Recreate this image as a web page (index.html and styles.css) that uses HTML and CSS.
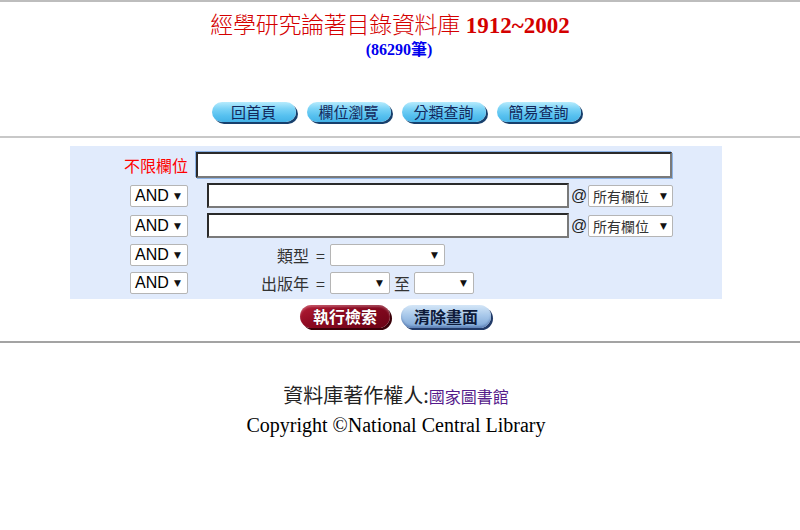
FILE: index.html
```html
<!DOCTYPE html>
<html lang="zh-Hant">
<head>
<meta charset="utf-8">
<title>經學研究論著目錄資料庫</title>
<link rel="stylesheet" href="styles.css">
</head>
<body>
<div class="topline"></div>
<h1 class="title"><span class="zh">經學研究論著目錄資料庫</span> <b>1912~2002</b></h1>
<div class="count">(86290筆)</div>

<nav class="nav">
  <a class="navbtn">回首頁</a>
  <a class="navbtn">欄位瀏覽</a>
  <a class="navbtn">分類查詢</a>
  <a class="navbtn">簡易查詢</a>
</nav>

<hr class="rule rule1">

<form class="search">
  <div class="row row-first">
    <label class="col1 red">不限欄位</label>
    <div class="input input-main"></div>
  </div>
  <div class="row">
    <div class="col1"><div class="select sel-and">AND<span class="arr">▼</span></div></div>
    <div class="input input-term"></div>
    <span class="at">@</span>
    <div class="select sel-field">所有欄位<span class="arr">▼</span></div>
  </div>
  <div class="row">
    <div class="col1"><div class="select sel-and">AND<span class="arr">▼</span></div></div>
    <div class="input input-term"></div>
    <span class="at">@</span>
    <div class="select sel-field">所有欄位<span class="arr">▼</span></div>
  </div>
  <div class="row row-short">
    <div class="col1"><div class="select sel-and">AND<span class="arr">▼</span></div></div>
    <span class="fieldlbl">類型&nbsp;&nbsp;=</span>
    <div class="select sel-type"><span class="arr">▼</span></div>
  </div>
  <div class="row row-short">
    <div class="col1"><div class="select sel-and">AND<span class="arr">▼</span></div></div>
    <span class="fieldlbl">出版年&nbsp;&nbsp;=</span>
    <div class="select sel-year"><span class="arr">▼</span></div>
    <span class="to">至</span>
    <div class="select sel-year"><span class="arr">▼</span></div>
  </div>
</form>

<div class="actions">
  <button class="act act-go" type="button">執行檢索</button>
  <button class="act act-clear" type="button">清除畫面</button>
</div>

<hr class="rule rule2">

<footer class="footer">
  <div class="owner">資料庫著作權人:<a class="lib">國家圖書館</a></div>
  <div class="copy">Copyright ©National Central Library</div>
</footer>
</body>
</html>
```

FILE: styles.css
```css
html, body {
  margin: 0;
  padding: 0;
  background: #ffffff;
}
body {
  font-family: "Liberation Sans", Arial, "Noto Sans CJK TC", sans-serif;
  color: #000;
}
.topline {
  height: 2px;
  background: #bdbdbd;
}
.title {
  margin: 7px 0 0 0;
  text-align: center;
  font-size: 23px;
  line-height: 28px;
  font-weight: normal;
  color: #d40000;
  font-family: "Liberation Serif", "Noto Sans CJK TC", serif;
  padding-right: 20px;
}
.title .zh {
  font-family: "Noto Sans CJK TC", sans-serif;
  font-weight: 300;
  letter-spacing: -0.3px;
}
.title b {
  font-weight: bold;
}
.count {
  text-align: center;
  color: #0000ee;
  font-weight: bold;
  font-size: 16px;
  line-height: 19px;
  font-family: "Liberation Serif", "Noto Sans CJK TC", serif;
  padding-right: 2px;
}
.nav {
  display: flex;
  justify-content: center;
  gap: 11px;
  margin-top: 43px;
  padding-right: 8px;
}
.navbtn {
  display: flex;
  align-items: center;
  justify-content: center;
  width: 84px;
  height: 20px;
  border-radius: 11px;
  background: linear-gradient(#b6ebfd 0%, #79d2f6 35%, #55c0ef 70%, #44b2e6 100%);
  box-shadow: 2px 2px 0 #173f6c;
  color: #13285c;
  font-size: 15px;
  font-family: "Noto Sans CJK TC", sans-serif;
  line-height: 20px;
  cursor: pointer;
}
.rule {
  border: 0;
  margin: 0;
}
.rule1 {
  margin-top: 14px;
  height: 2px;
  background: #c8c8c8;
}
.rule2 {
  margin-top: 13px;
  height: 2px;
  background: #a3a3a3;
}
.search {
  margin: 8px 0 0 70px;
  width: 652px;
  background: #e1ebfc;
  padding: 6px 0 5px 0;
  box-sizing: border-box;
  height: 153px;
  display: flex;
  flex-direction: column;
  gap: 5px;
}
.row {
  display: flex;
  align-items: center;
  height: 25px;
}
.row-first {
  height: 26px;
}
.row-short {
  height: 22px;
  margin-top: 1px;
}
.col1 {
  width: 118px;
  display: flex;
  justify-content: flex-end;
  flex: none;
}
.red {
  color: #ff0000;
  font-size: 16px;
  font-family: "Noto Sans CJK TC", sans-serif;
  line-height: 26px;
}
.input {
  background: #fff;
  box-sizing: border-box;
  border: 2px solid;
  border-color: #2a2a2a #7a7a7a #7a7a7a #2a2a2a;
}
.input-main {
  margin-left: 8px;
  width: 476px;
  height: 26px;
  box-shadow: 1px 1px 0 #8cb3e6, -1px -1px 0 #8cb3e6;
}
.input-term {
  margin-left: 19px;
  width: 362px;
  height: 25px;
}
.at {
  margin-left: 2px;
  font-size: 16px;
  width: 15px;
  color: #222;
}
.select {
  background: #fff;
  border: 1px solid #b5b5b5;
  border-radius: 2px;
  box-sizing: border-box;
  height: 22px;
  display: flex;
  align-items: center;
  font-size: 16px;
  color: #000;
}
.arr {
  font-family: "DejaVu Sans", sans-serif;
  font-size: 9px;
  margin-left: auto;
  margin-right: 6px;
  color: #111;
}
.sel-and {
  width: 58px;
  padding-left: 4px;
}
.sel-field {
  margin-left: 2px;
  width: 85px;
  padding-left: 4px;
  font-family: "Noto Sans CJK TC", sans-serif;
  font-size: 14px;
  color: #333;
}
.sel-field .arr {
  margin-right: 5px;
}
.sel-type {
  width: 115px;
}
.sel-year {
  width: 60px;
}
.fieldlbl {
  width: 137px;
  text-align: right;
  font-family: "Noto Sans CJK TC", sans-serif;
  font-size: 16px;
  color: #333;
  margin-right: 5px;
}
.to {
  font-family: "Noto Sans CJK TC", sans-serif;
  font-size: 16px;
  color: #333;
  margin: 0 4px;
}
.actions {
  display: flex;
  justify-content: center;
  gap: 11px;
  margin-top: 6px;
  padding-right: 9px;
}
.act {
  width: 90px;
  height: 23px;
  border: 0;
  border-radius: 12px;
  font-family: "Noto Sans CJK TC", sans-serif;
  font-size: 16px;
  font-weight: bold;
  line-height: 23px;
  padding: 0;
  cursor: pointer;
}
.act-go {
  color: #ffffff;
  background: linear-gradient(160deg, #b51d35 0%, #8d0a22 40%, #6a0416 100%);
  box-shadow: 2px 2px 0 #3a0008, inset 0 2px 2px rgba(255,255,255,0.25);
  text-shadow: 0 0 1px #5a0010;
}
.act-clear {
  color: #0d1a3a;
  background: linear-gradient(#d4e6f7 0%, #a8c8ea 45%, #7ea6d6 100%);
  box-shadow: 2px 2px 0 #213a68, inset 0 -2px 2px rgba(40,70,130,0.35);
}
.footer {
  margin-top: 40px;
  text-align: center;
  padding-right: 8px;
}
.owner {
  font-family: "Noto Sans CJK TC", sans-serif;
  font-weight: 400;
  font-size: 20px;
  line-height: 24px;
  color: #222;
}
.lib {
  color: #551a8b;
  font-size: 16px;
  text-decoration: none;
}
.copy {
  margin-top: 4px;
  font-family: "Liberation Serif", "Times New Roman", serif;
  font-size: 20px;
  line-height: 26px;
  color: #000;
}
```
